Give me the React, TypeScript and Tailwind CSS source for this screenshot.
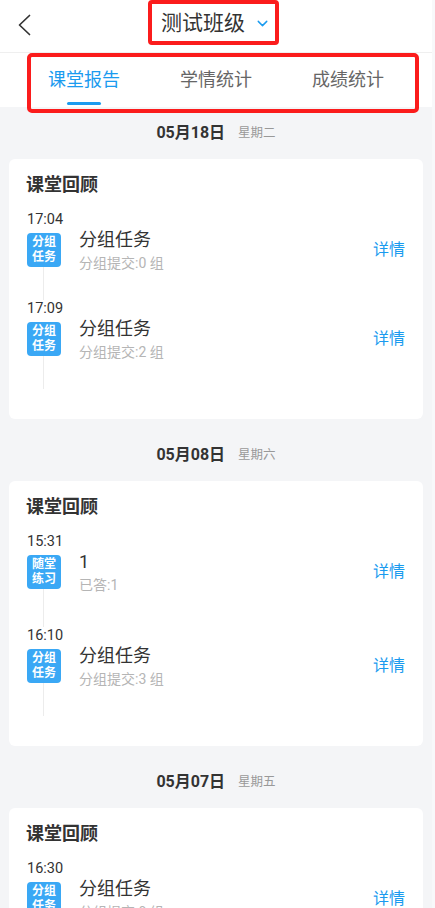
import { ChevronDown } from 'lucide-react';

interface ReviewItem {
  time: string;
  badge: [string, string];
  title: string;
  sub: string;
  tail?: number;
}

interface DaySection {
  date: string;
  week: string;
  items: ReviewItem[];
}

const sections: DaySection[] = [
  {
    date: '05月18日',
    week: '星期二',
    items: [
      { time: '17:04', badge: ['分组', '任务'], title: '分组任务', sub: '分组提交:0 组' },
      { time: '17:09', badge: ['分组', '任务'], title: '分组任务', sub: '分组提交:2 组' },
    ],
  },
  {
    date: '05月08日',
    week: '星期六',
    items: [
      { time: '15:31', badge: ['随堂', '练习'], title: '1', sub: '已答:1', tail: 38 },
      { time: '16:10', badge: ['分组', '任务'], title: '分组任务', sub: '分组提交:3 组' },
    ],
  },
  {
    date: '05月07日',
    week: '星期五',
    items: [
      { time: '16:30', badge: ['分组', '任务'], title: '分组任务', sub: '分组提交:0 组' },
      { time: '16:41', badge: ['分组', '任务'], title: '分组任务', sub: '分组提交:1 组' },
    ],
  },
];

const tabs = ['课堂报告', '学情统计', '成绩统计'];

function Item({ item }: { item: ReviewItem }) {
  return (
    <div className="flex flex-col">
      <div className="h-[18px] text-[14.5px] leading-[18px] text-[#333]">{item.time}</div>
      <div className="mt-[4px] flex h-[34px] items-center">
        <div className="flex h-[34px] w-[34px] shrink-0 flex-col items-center justify-center rounded-[4px] bg-[#3aa8f5] text-[12px] font-bold leading-[15px] text-white">
          <span>{item.badge[0]}</span>
          <span>{item.badge[1]}</span>
        </div>
        <div className="ml-[18px] flex flex-1 flex-col">
          <span className="text-[18px] leading-[24px] text-[#333]">{item.title}</span>
          <span className="mt-[2px] text-[14px] leading-[18px] text-[#b5b5b5]">{item.sub}</span>
        </div>
        <span className="mr-[1px] text-[16px] leading-[22px] text-[#1a9bef]">详情</span>
      </div>
      <div className="ml-[16px] w-px bg-[#ececec]" style={{ height: item.tail ?? 33 }} />
    </div>
  );
}

export default function App() {
  return (
    <div
      className="relative flex min-h-[908px] bg-[#f8f8fa]"
      style={{ fontFamily: 'Roboto, "Noto Sans CJK SC", sans-serif' }}>
      <div className="flex w-[432px] flex-col bg-[#f4f5f7]">
        <header className="grid h-[53px] grid-cols-[1fr_auto_1fr] border-b border-[#efefef] bg-white">
          <div className="pl-[17px] pt-[13px]">
            <svg width="14" height="24" viewBox="0 0 14 24" fill="none">
              <polyline
                points="12.5,2.5 2.5,12 12.5,21.5"
                stroke="#333"
                strokeWidth="1.7"
                strokeLinecap="round"
                strokeLinejoin="round"
              />
            </svg>
          </div>
          <div className="flex items-center pt-[2px] pb-[8px]">
            <span className="text-[21px] leading-[28px] text-[#333]">测试班级</span>
            <ChevronDown size={17} strokeWidth={2} className="ml-[9px] text-[#1a9bef]" />
          </div>
          <div />
        </header>

        <nav className="flex h-[54px] bg-white px-[18px]">
          {tabs.map((t, i) => (
            <div key={t} className="flex flex-1 flex-col items-center pt-[15px]">
              <span
                className={
                  i === 0
                    ? 'text-[18px] leading-[24px] text-[#1a9bef]'
                    : 'text-[18px] leading-[24px] text-[#666]'
                }>
                {t}
              </span>
              {i === 0 && <div className="mt-[10px] h-[3px] w-[34px] rounded-full bg-[#1a9bef]" />}
            </div>
          ))}
        </nav>

        {sections.map(sec => (
          <section key={sec.date}>
            <div className="flex h-[52px] items-center justify-center">
              <span className="text-[16px] font-bold text-[#333]">{sec.date}</span>
              <span className="ml-[13px] text-[12.5px] text-[#999]">{sec.week}</span>
            </div>
            <div className="mx-[9px] mb-[10px] rounded-[6px] bg-white px-[17px] pb-[30px] pt-[14px]">
              <div className="text-[18px] font-bold leading-[24px] text-[#333]">课堂回顾</div>
              <div className="mt-[14px] flex flex-col pl-[1px]">
                {sec.items.map(item => (
                  <Item key={item.time} item={item} />
                ))}
              </div>
            </div>
          </section>
        ))}
      </div>
      <div className="w-[3px]" />

      <div className="pointer-events-none absolute left-[148px] top-0 h-[45px] w-[131px] rounded-[4px] border-[4px] border-[#fb1c1c]" />
      <div className="pointer-events-none absolute left-[27px] top-[53px] h-[60px] w-[392px] rounded-[5px] border-[4px] border-[#fb1c1c]" />
    </div>
  );
}
